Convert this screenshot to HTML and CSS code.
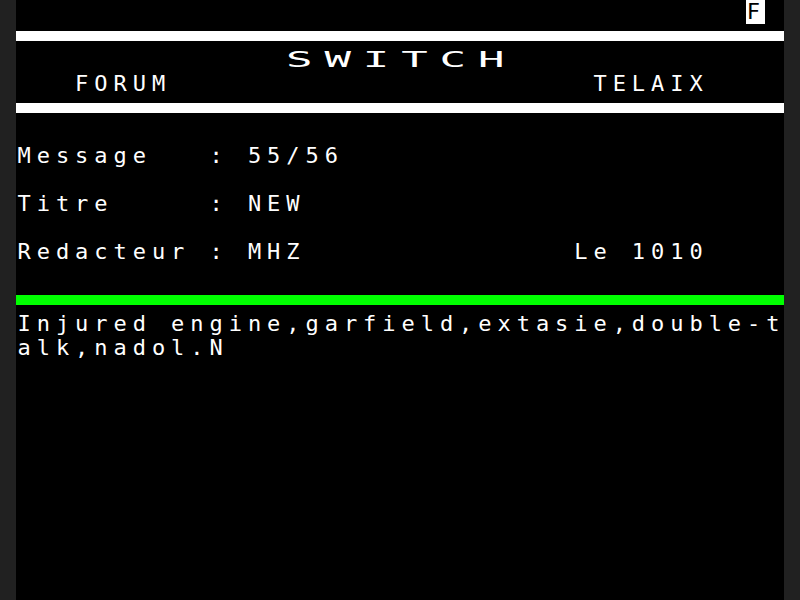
FILE: index.html
```html
<!DOCTYPE html>
<html lang="fr">
<head>
<meta charset="utf-8">
<title>SWITCH - Forum Telaix</title>
<link rel="stylesheet" href="styles.css">
</head>
<body>
<main class="screen">
  <div class="row status"><span class="inv">F</span></div>
  <div class="row bar-row"><div class="bar bar-white"></div></div>
  <div class="row text">              <span class="dw">SWITCH</span></div>
  <div class="row text">   FORUM                      TELAIX</div>
  <div class="row bar-row"><div class="bar bar-white"></div></div>
  <div class="row"></div>
  <div class="row text">Message   : 55/56</div>
  <div class="row"></div>
  <div class="row text">Titre     : NEW</div>
  <div class="row"></div>
  <div class="row text">Redacteur : MHZ              Le 1010</div>
  <div class="row"></div>
  <div class="row bar-row"><div class="bar bar-green"></div></div>
  <div class="row text">Injured engine,garfield,extasie,double-t</div>
  <div class="row text">alk,nadol.N</div>
</main>
</body>
</html>
```

FILE: styles.css
```css
html, body {
  margin: 0;
  padding: 0;
  background: #212121;
}

.screen {
  width: 768px;
  height: 600px;
  margin: 0 16px;
  background: #000;
  color: #fff;
  font-family: "DejaVu Sans Mono", "Liberation Mono", monospace;
  font-size: 22px;
  letter-spacing: 5.954px;
}

.row {
  box-sizing: border-box;
  height: 24px;
  line-height: 24px;
  white-space: pre;
}

.text {
  padding-left: 1.5px;
  margin-right: -6px;
}

.status {
  display: flex;
  justify-content: flex-end;
  padding-right: 19.2px;
}

.inv {
  display: block;
  width: 19.2px;
  height: 24px;
  background: #fff;
  color: #000;
  letter-spacing: 0;
  text-indent: 1px;
}

.dw {
  display: inline-block;
  transform: scaleX(2);
  transform-origin: left center;
}

.bar-row {
  padding-top: 7px;
}

.bar {
  height: 10px;
}

.bar-white {
  background: #fff;
}

.bar-green {
  background: #00ff00;
}
```
